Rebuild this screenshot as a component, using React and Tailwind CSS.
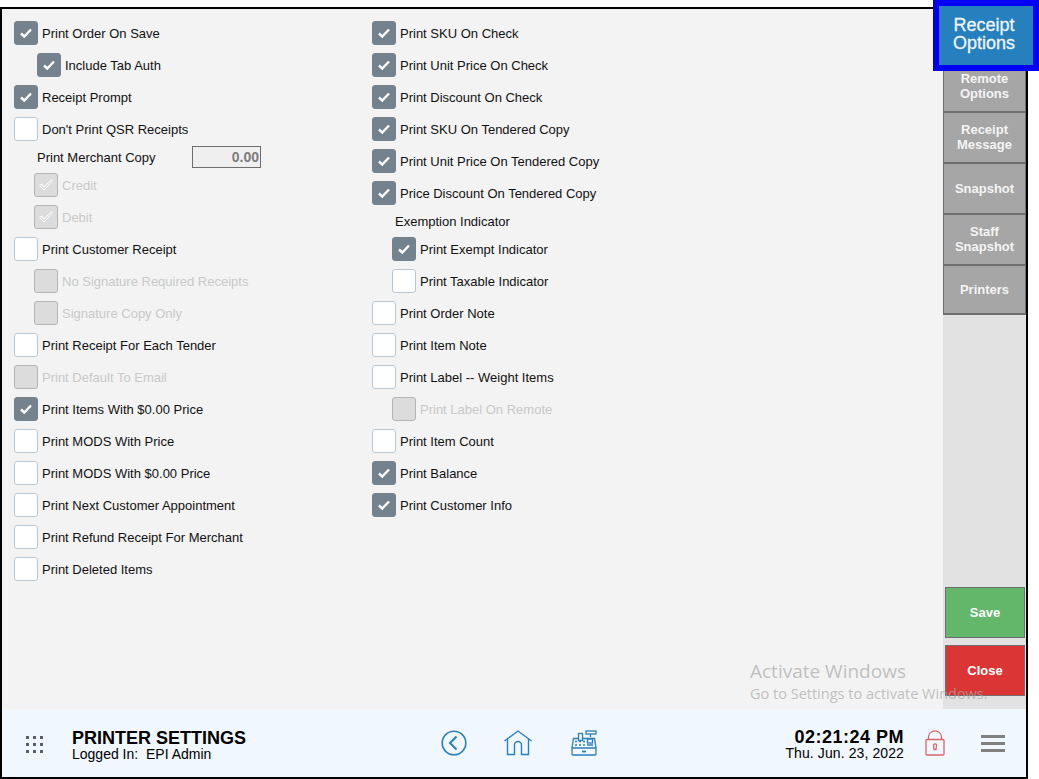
const leftRows = [
  { label: 'Print Order On Save', checked: true },
  { label: 'Include Tab Auth', checked: true, indent: 'tab' },
  { label: 'Receipt Prompt', checked: true },
  { label: "Don't Print QSR Receipts" },
  { type: 'merchant' },
  { label: 'Credit', checked: true, disabled: true, indent: 'sub' },
  { label: 'Debit', checked: true, disabled: true, indent: 'sub' },
  { label: 'Print Customer Receipt' },
  { label: 'No Signature Required Receipts', disabled: true, indent: 'sub' },
  { label: 'Signature Copy Only', disabled: true, indent: 'sub' },
  { label: 'Print Receipt For Each Tender' },
  { label: 'Print Default To Email', disabled: true },
  { label: 'Print Items With $0.00 Price', checked: true },
  { label: 'Print MODS With Price' },
  { label: 'Print MODS With $0.00 Price' },
  { label: 'Print Next Customer Appointment' },
  { label: 'Print Refund Receipt For Merchant' },
  { label: 'Print Deleted Items' },
]

const rightRows = [
  { label: 'Print SKU On Check', checked: true },
  { label: 'Print Unit Price On Check', checked: true },
  { label: 'Print Discount On Check', checked: true },
  { label: 'Print SKU On Tendered Copy', checked: true },
  { label: 'Print Unit Price On Tendered Copy', checked: true },
  { label: 'Price Discount On Tendered Copy', checked: true },
  { type: 'heading', label: 'Exemption Indicator' },
  { label: 'Print Exempt Indicator', checked: true, indent: 'sub' },
  { label: 'Print Taxable Indicator', indent: 'sub' },
  { label: 'Print Order Note' },
  { label: 'Print Item Note' },
  { label: 'Print Label -- Weight Items' },
  { label: 'Print Label On Remote', disabled: true, indent: 'sub' },
  { label: 'Print Item Count' },
  { label: 'Print Balance', checked: true },
  { label: 'Print Customer Info', checked: true },
]

const tabs = [
  ['Remote', 'Options'],
  ['Receipt', 'Message'],
  ['Snapshot'],
  ['Staff', 'Snapshot'],
  ['Printers'],
]

const CheckBox = ({ checked, disabled }) => {
  let box = 'bg-white border-[#b9c7d3]'
  if (checked && !disabled) box = 'bg-[#74828e] border-[#74828e]'
  if (disabled) box = 'bg-[#dcdcdc] border-[#b4b4b4]'

  return (
    <span className={`flex h-6 w-6 shrink-0 items-center justify-center rounded-[3px] border ${box}`}>
      {checked && !disabled && (
        <svg width="14" height="12" viewBox="0 0 14 12" fill="none">
          <path d="M2 6.5 L5.3 9.5 L12 2.5" stroke="#fff" strokeWidth="2.4" />
        </svg>
      )}
      {checked && disabled && (
        <svg width="16" height="14" viewBox="0 0 16 14" fill="none">
          <path d="M1.5 7.5 L4 6 L6 9 L13.5 1.5 L14.5 3 L6 12 Z" stroke="#fff" strokeWidth="1" fill="#dcdcdc" />
        </svg>
      )}
    </span>
  )
}

const OptionRow = ({ row }) => {
  if (row.type === 'merchant') {
    return (
      <div className="flex h-6 items-center pl-[23px]">
        <span className="w-[155px] pt-px text-[#111]">Print Merchant Copy</span>
        <span className="flex h-[22px] w-[69px] items-center justify-end border border-[#6e6e6e] bg-[#efefef] pr-px text-[14px] font-bold text-[#7c7c7c]">
          0.00
        </span>
      </div>
    )
  }
  if (row.type === 'heading') {
    return <div className="flex h-6 items-center pl-[23px] pt-px text-[#111]">{row.label}</div>
  }

  let indent = ''
  if (row.indent === 'tab') indent = 'pl-[23px]'
  if (row.indent === 'sub') indent = 'pl-5'

  return (
    <div className={`flex h-8 items-center gap-1 ${indent}`}>
      <CheckBox checked={row.checked} disabled={row.disabled} />
      <span className={`pt-px ${row.disabled ? 'text-[#c9c9c9]' : 'text-[#111]'}`}>{row.label}</span>
    </div>
  )
}

const DotsIcon = () => (
  <svg width="18" height="17" viewBox="0 0 18 17" fill="#54606c">
    {[0, 7, 14].map((y) =>
      [0, 7, 14].map((x) => <rect key={`${x}-${y}`} x={x} y={y} width="3" height="3" />)
    )}
  </svg>
)

const BackIcon = () => (
  <svg width="26" height="26" viewBox="0 0 26 26" fill="none" stroke="#2a80b9" strokeWidth="1.6">
    <circle cx="13" cy="13" r="11.8" />
    <path d="M15.5 6.5 L9 13 L15.5 19.5" strokeWidth="2" />
  </svg>
)

const HomeIcon = () => (
  <svg width="28" height="26" viewBox="0 0 28 26" fill="none" stroke="#2a80b9" strokeWidth="1.4">
    <path d="M0.5 11 L14 1 L27.5 11" />
    <path d="M3.5 9 V24.5 H10.5 V15 A3.5 3.5 0 0 1 17.5 15 V24.5 H24.5 V9" />
  </svg>
)

const RegisterIcon = () => (
  <svg width="26" height="26" viewBox="0 0 26 26" fill="none" stroke="#2a80b9" strokeWidth="1.3">
    <path d="M1 18 H25 V24 A1 1 0 0 1 24 25 H2 A1 1 0 0 1 1 24 Z" />
    <path d="M1 18 L2.5 8.5 H7 M12 8.5 H23.5 L25 18" />
    <rect x="7.5" y="3.5" width="4" height="7" />
    <rect x="15" y="1" width="10" height="3" />
    <path d="M19.5 4 V7" />
    <rect x="16.5" y="9" width="5" height="4" />
    <path d="M4 11.5 H6 M8 11.5 H10 M12 11.5 H14 M4 15 H6 M8 15 H10 M12 15 H14 M16 15 H22" />
    <path d="M11 21.5 H15" strokeWidth="1.8" />
  </svg>
)

const LockIcon = () => (
  <svg width="20" height="26" viewBox="0 0 20 26" fill="none" stroke="#d4686c" strokeWidth="1.3">
    <rect x="1" y="9.5" width="18" height="15.5" rx="1" />
    <path d="M3.5 9.5 V7 A6.5 6.2 0 0 1 16.5 7 V9.5" />
    <path d="M8.5 15 A1.6 1.6 0 0 1 11.5 15 L11 19.5 H9 Z" />
  </svg>
)

const App = () => {
  return (
    <div className="relative h-[779px] w-[1039px] overflow-hidden bg-white pt-[7px] font-['Liberation_Sans',Arial,sans-serif] text-[13px]">
      <div className="flex h-[772px] w-[1028px] flex-col border-2 border-black">
        <div className="flex min-h-0 flex-1">
          {/* Option columns */}
          <div className="flex flex-1 bg-[#f3f3f3] pl-3 pt-2">
            <div className="w-[358px]">
              {leftRows.map((row, i) => (
                <OptionRow key={i} row={row} />
              ))}
            </div>
            <div>
              {rightRows.map((row, i) => (
                <OptionRow key={i} row={row} />
              ))}
            </div>
          </div>

          {/* Side tabs */}
          <div className="flex w-[83px] flex-col bg-[#e2e2e2] pt-[53px]">
            {tabs.map((lines, i) => (
              <button
                key={lines[0] + lines.length}
                className={`flex flex-col items-center justify-center border-x border-b-2 border-[#6e6e6e] bg-[#a6a6a6] text-[13px] leading-[15px] font-bold text-[#f4f4f4] ${i === tabs.length - 1 ? 'h-[49px]' : 'h-[51px]'} ${lines.length > 1 ? 'pb-[2px]' : ''}`}
              >
                {lines.map((line) => (
                  <span key={line}>{line}</span>
                ))}
              </button>
            ))}
            <div className="mt-auto flex flex-col gap-[7px] pr-px pb-[13px] pl-[2px]">
              <button className="h-[51px] border border-[#6e6e6e] bg-[#62b76a] text-[13px] font-bold text-white">Save</button>
              <button className="h-[51px] border border-[#6e6e6e] bg-[#dc3535] text-[13px] font-bold text-white">Close</button>
            </div>
          </div>
        </div>

        {/* Footer */}
        <div className="flex h-[68px] shrink-0 items-center bg-[#f0f7fe] text-black">
          <div className="ml-6 mt-[2px]"><DotsIcon /></div>
          <div className="ml-7 w-[369px] pt-1">
            <div className="text-[18px] leading-[17px] font-bold">PRINTER SETTINGS</div>
            <div className="text-[14px] leading-[14px] whitespace-pre">Logged In:  EPI Admin</div>
          </div>
          <div className="flex items-center">
            <BackIcon />
            <div className="ml-[37px]"><HomeIcon /></div>
            <div className="ml-[39px]"><RegisterIcon /></div>
          </div>
          <div className="ml-auto mr-[21px] flex items-center">
            <div className="pt-[3px] text-right">
              <div className="text-[18px] leading-[18px] font-bold tracking-[0.5px]">02:21:24 PM</div>
              <div className="text-[14px] leading-[15px] tracking-[0.1px]">Thu. Jun. 23, 2022</div>
            </div>
            <div className="ml-[21px]"><LockIcon /></div>
            <div className="ml-9 flex w-6 flex-col gap-1">
              <span className="h-[3px] bg-[#808080]" />
              <span className="h-[3px] bg-[#808080]" />
              <span className="h-[3px] bg-[#808080]" />
            </div>
          </div>
        </div>
      </div>

      {/* Active tab sits over the frame */}
      <div className="absolute top-0 left-[933px] flex h-[71px] w-[106px] flex-col items-center justify-center border-[6px] border-[#0000f5] bg-[#2680bd] pr-1 pb-1 text-[18px] leading-[18px] text-[#eef6fb] [-webkit-text-stroke:0.3px_#eef6fb]">
        <span>Receipt</span>
        <span>Options</span>
      </div>

      {/* Windows watermark */}
      <div className="pointer-events-none absolute top-[659px] left-[750px] font-['Open_Sans',sans-serif] text-[#a8a8a8]/70">
        <div className="text-[19px] leading-[25px]">Activate Windows</div>
        <div className="text-[14.5px] leading-[20px]">Go to Settings to activate Windows.</div>
      </div>
    </div>
  )
}

export default App
